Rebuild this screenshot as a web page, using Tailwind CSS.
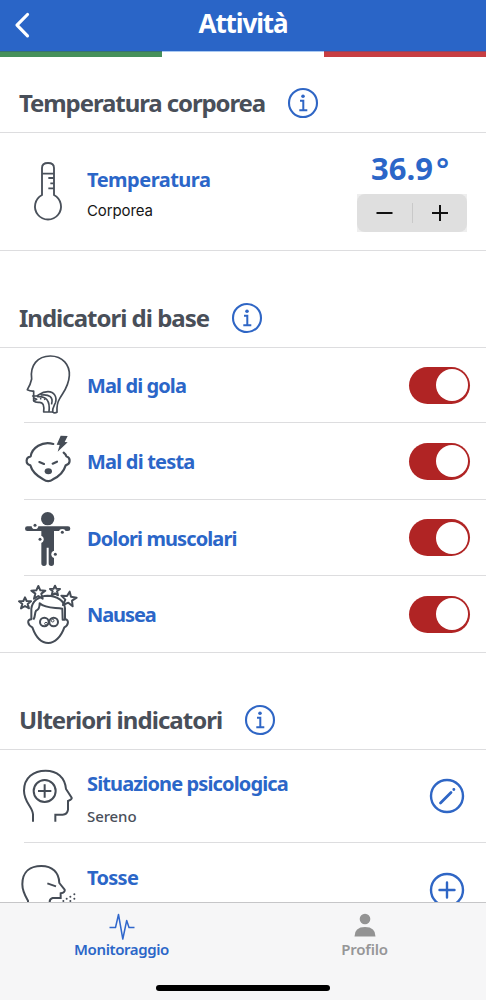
<!DOCTYPE html>
<html lang="it">
<head>
<meta charset="utf-8">
<meta name="viewport" content="width=device-width, initial-scale=1">
<title>Attività</title>
<script src="https://cdn.jsdelivr.net/npm/@tailwindcss/browser@4"></script>
</head>
<body class="bg-white">
<svg class="hidden">
  <symbol id="info" viewBox="0 0 32 32"><g fill="none" stroke="#2f66c5" stroke-width="2.1"><circle cx="16" cy="16" r="14"/><path d="M13 13.7h3.3v9M12.3 23.3h8" stroke-width="2"/></g><circle cx="16" cy="9.2" r="1.8" fill="#2f66c5"/></symbol>
</svg>
<div class="flex h-[1000px] w-[486px] flex-col overflow-hidden font-['Noto_Sans',sans-serif] font-bold text-[#2b66c8]">
  <header class="grid h-[51px] shrink-0 grid-cols-[60px_1fr_60px] bg-[#2a65c7] text-white">
    <svg class="h-[51px] w-[60px]" viewBox="0 0 60 51" fill="none" stroke="white" stroke-width="3.2" stroke-linecap="round" stroke-linejoin="round"><path d="M27.500 14.500 17 25.200l10.500 10.600"/></svg>
    <h1 class="pt-[5px] text-center text-[26px] leading-9 tracking-[-1.1px]">Attività</h1>
  </header>
  <div class="grid h-[6px] shrink-0 grid-cols-3"><i class="border-t border-[#38736f] bg-[#46905a]"></i><i class="border-t border-[#a9c9f2]"></i><i class="border-t border-[#8a466b] bg-[#c73d42]"></i></div>

  <main class="flex min-h-0 flex-1 flex-col overflow-hidden">
    <div class="flex h-[76px] shrink-0 items-center gap-[22px] border-b border-[#dddddf] pt-[17px] pl-[19px] text-[#494f59]">
      <h2 class="text-[24px] leading-8 tracking-[-1.1px]">Temperatura corporea</h2><svg class="size-8"><use href="#info"/></svg>
    </div>
    <section class="flex h-[118px] shrink-0 border-b border-[#dddddf]">
      <svg class="h-[117px] w-[87px]" viewBox="0 -21 261 351" fill="none" stroke="#4a515b" stroke-width="5.6"><path d="M126 165V84q0-15 18-15t18 15v81a39 39 0 1 1-36 0ZM126 101h36M145 114h17M151 130h11M145 145h17"/></svg>
      <div class="flex-1 pt-[33px]">
        <h3 class="text-[20px] leading-7 tracking-[-0.5px]">Temperatura</h3>
        <p class="mt-[7px] font-[Inter] text-[15px] leading-5 font-normal tracking-[-0.1px] text-[#161616]">Corporea</p>
      </div>
      <div class="mr-[19px] w-[110px] pt-[14px]">
        <div class="flex h-[43px] pl-[14px] text-[31px] leading-[43px]"><span>36.9</span><span class="ml-[3px] font-semibold">°</span></div>
        <svg class="mt-[4px] h-[38px] w-[110px]" viewBox="0 0 110 38"><path fill="#eeeeee" d="M0 0h110v38H0z"/><rect width="110" height="38" rx="8" fill="#dfdfdf"/><path stroke="#c9c9c9" d="M55.5 9v20"/><path stroke="#111" stroke-width="2" d="M19.500 19h16M75 19h16M83 11v16"/></svg>
      </div>
    </section>

    <div class="flex h-[97px] shrink-0 items-center gap-[22px] border-b border-[#dddddf] pt-[38px] pl-[19px] text-[#494f59]">
      <h2 class="text-[24px] leading-8 tracking-[-1px]">Indicatori di base</h2><svg class="size-8"><use href="#info"/></svg>
    </div>
    <section class="shrink-0 text-[20px] tracking-[-0.9px]">
      <div class="ml-[24px] flex h-[75px] items-center border-b border-[#dddddf]">
        <svg class="-ml-[24px] h-[75px] w-[87px] shrink-0" viewBox="0 0 261 225" fill="none" stroke="#454c56" stroke-width="5" stroke-linecap="round" stroke-linejoin="round"><path d="M101 158v-29q-10 1-19-4 10-17 13-32C89 52 113 24 151 24c37 0 59 27 57 59-2 34-18 49-29 69-7 11-9 25-8 41q-8 4-13-1"/><path d="M98 144h12c13-8 18-13 34-13 19 0 28 16 22 34-5 11-9 16-8 27h-27c2-19-1-29-13-29q-13 1-17-5l9-4-9-4M113 146c25-2 38 12 34 45M124 141c25-3 36 8 31 26"/><path d="M122 152h.1M134 154h.1"/></svg>
        <div class="flex flex-1 items-center justify-between pr-[16px]"><h3 class="pt-[2px]">Mal di gola</h3><i class="flex h-[37px] w-[61px] items-center justify-end rounded-full bg-[#b02424] pr-[2px]"><b class="size-[32px] rounded-full bg-white"></b></i></div>
      </div>
      <div class="ml-[24px] flex h-[77px] items-center border-b border-[#dddddf]">
        <svg class="-ml-[24px] h-[77px] w-[87px] shrink-0" viewBox="0 -3 261 231" fill="none" stroke="#454c56" stroke-width="6.5" stroke-linecap="round" stroke-linejoin="round"><path d="M160 60c-34-10-64 12-68 37-15 3-17 22-1 27 7 25 28 36 39 42 9 7 20 7 29 0 14-7 31-18 38-42 15-4 16-22 2-27-1-4-3-7-8-11M118 114l14 6M158 119l13-6"/><path fill="#454c56" stroke="none" d="m182 35 21 1-9 18 9 1-30 28 6-20-9-1Z"/><ellipse cx="145" cy="142" rx="11" ry="9" fill="#454c56" stroke="none"/></svg>
        <div class="flex flex-1 items-center justify-between pr-[16px]"><h3 class="pt-[2px] tracking-[-0.8px]">Mal di testa</h3><i class="flex h-[37px] w-[61px] items-center justify-end rounded-full bg-[#b02424] pr-[2px]"><b class="size-[32px] rounded-full bg-white"></b></i></div>
      </div>
      <div class="ml-[24px] flex h-[76px] items-center border-b border-[#dddddf]">
        <svg class="-ml-[24px] h-[76px] w-[87px] shrink-0" viewBox="0 0 261 228" fill="#454c56"><circle cx="143" cy="56" r="20"/><path d="M82 79h122q7 0 7 7t-7 7h-42v97q0 8-8 8t-8-8v-47h-6v47q0 8-8 8t-8-8V93H82q-7 0-7-7t7-7Z"/><g fill="white"><circle cx="105" cy="77" r="10"/><circle cx="187" cy="97" r="10"/><circle cx="120" cy="118" r="11"/><circle cx="165" cy="163" r="11"/></g><circle cx="105" cy="76" r="4.500"/><circle cx="187" cy="97" r="4.500"/><circle cx="120" cy="118" r="4.500"/><circle cx="166" cy="163" r="4.500"/></svg>
        <div class="flex flex-1 items-center justify-between pr-[16px]"><h3 class="pt-[2px]">Dolori muscolari</h3><i class="flex h-[37px] w-[61px] items-center justify-end rounded-full bg-[#b02424] pr-[2px]"><b class="size-[32px] rounded-full bg-white"></b></i></div>
      </div>
      <div class="flex h-[77px] items-center border-b border-[#dddddf]">
        <svg class="h-[76px] w-[87px] shrink-0" viewBox="0 0 261 228" fill="none" stroke="#454c56" stroke-width="6" stroke-linejoin="round"><path d="M94 130V98c3-22 21-38 49-39 29 0 51 17 52 38v33c13 0 11 18-2 24-10 29-29 47-48 47-22 0-38-19-48-47-15-7-17-24-3-24ZM100 131c7-9 3-19 8-27 11-3 11-14 11-22 19 17 44 12 68 16l1 33h7"/><g fill="white"><path d="m75 64 5 11 13 1-10 8 4 13-12-7-12 7 4-13-10-8 13-1Z"/><path d="m115 30 6 13 15 1-12 9 4 15-13-8-13 8 4-15-12-9 15-1Z"/><path d="m165 29 4 9 11 1-9 7 3 12-9-6-10 6 3-12-8-7 11-1Z"/><path d="m209 47 4 15 17 3-14 9 2 17-13-11-16 7 7-16-12-12 17 1Z"/></g><circle cx="133" cy="138" r="13"/><circle cx="161" cy="138" r="13"/><circle cx="138" cy="143" r="4" stroke-width="3"/><circle cx="158" cy="134" r="4" stroke-width="3"/></svg>
        <div class="flex flex-1 items-center justify-between pr-[16px]"><h3 class="pt-[2px] tracking-[-1.1px]">Nausea</h3><i class="flex h-[37px] w-[61px] items-center justify-end rounded-full bg-[#b02424] pr-[2px]"><b class="size-[32px] rounded-full bg-white"></b></i></div>
      </div>
    </section>

    <div class="flex h-[97px] shrink-0 items-center gap-[22px] border-b border-[#dddddf] pt-[38px] pl-[19px] text-[#494f59]">
      <h2 class="text-[24px] leading-8 tracking-[-0.95px]">Ulteriori indicatori</h2><svg class="size-8"><use href="#info"/></svg>
    </div>
    <section class="shrink-0">
      <div class="ml-[24px] flex h-[93px] border-b border-[#dddddf]">
        <svg class="-ml-[24px] h-[93px] w-[87px] shrink-0" viewBox="0 -15 261 279" fill="none" stroke="#454c56" stroke-width="6"><path d="M99 200v-22c-1-22-27-36-27-71 0-39 29-60 65-60 34 0 58 20 61 55l17 26q2 5-11 10v26q-2 15-16 15h-22v21"/><circle cx="134" cy="108" r="33"/><path d="M134 88v40M114 108h40"/></svg>
        <div class="flex-1 pt-[20px]"><h3 class="text-[20px] leading-7 tracking-[-0.87px]">Situazione psicologica</h3><p class="mt-[8px] text-[15px] leading-5 font-medium tracking-[-0.1px] text-[#4a505a]">Sereno</p></div>
        <div class="pt-[28px] pr-[21px]"><svg class="size-[36px]" viewBox="0 0 36 36" fill="none" stroke="#2f66c5" stroke-width="2.4" stroke-linecap="round"><circle cx="18" cy="18" r="16"/><path stroke-width="2.800" d="M11.500 25 22 14.500M24.800 11.500h.1"/></svg></div>
      </div>
      <div class="flex h-[93px]">
        <svg class="h-[93px] w-[87px] shrink-0" viewBox="0 264 261 279" fill="none" stroke="#454c56" stroke-width="6"><path d="M84 448v-11c-7-12-17-27-17-49 0-39 25-55 57-55 33 0 53 19 54 51l16 20q2 8-12 11v14h-24q-9 2-9 12M142 385l26 9"/><path stroke-linecap="round" d="M190 438h.1M200 431h.1M211 438h.1M211 425h.1M223 418h.1M223 431h.1"/></svg>
        <div class="flex-1 pt-[21px]"><h3 class="text-[20px] leading-7 tracking-[-0.7px]">Tosse</h3></div>
        <div class="pt-[29px] pr-[21px]"><svg class="size-[36px]" viewBox="0 0 36 36" fill="none" stroke="#2f66c5" stroke-width="2.4" stroke-linecap="round"><circle cx="18" cy="18" r="16"/><path d="M18 10.500v15M10.500 18h15"/></svg></div>
      </div>
    </section>
  </main>

  <footer class="flex h-[98px] shrink-0 flex-col items-center border-t border-[#c6c6c8] bg-[#f6f6f7]">
    <nav class="grid h-[82px] w-full grid-cols-2 text-[15px] leading-5 font-semibold">
      <div class="flex flex-col items-center"><svg class="mt-[9px] h-[28px] w-[28px]" viewBox="0 0 28 28" fill="none" stroke="#3067cc" stroke-width="1.500" stroke-linejoin="round"><path d="M1.500 15.500h6l3-13 4.300 24.500L18.700 8.500l2.300 7h5.500"/></svg><span class="-mt-px tracking-[-0.4px]">Monitoraggio</span></div>
      <div class="flex flex-col items-center text-[#969698]"><svg class="mt-[9px] h-[28px] w-[28px]" viewBox="0 0 28 28" fill="#939393"><circle cx="14" cy="7" r="5.300"/><path d="M3.500 24.500q0-9.500 10.500-9.500t10.500 9.500Z"/></svg><span class="-mt-px tracking-[-0.2px]">Profilo</span></div>
    </nav>
    <div class="h-[6px] w-[174px] rounded-full bg-black"></div>
  </footer>
</div>
</body>
</html>
